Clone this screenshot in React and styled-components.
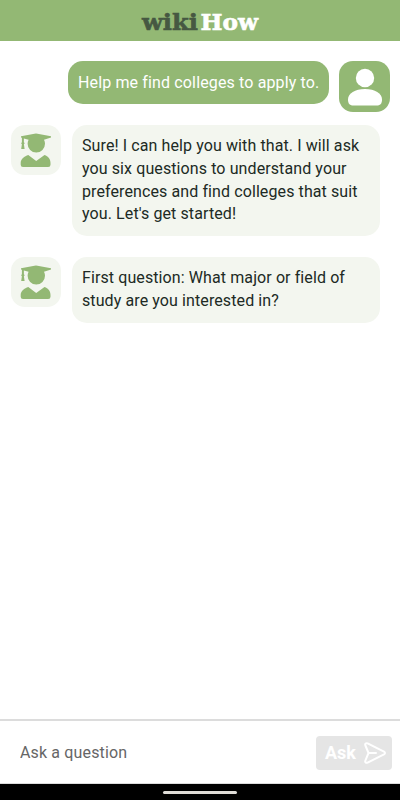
import React, { useState } from "react";
import styled, { createGlobalStyle } from "styled-components";

const GlobalStyle = createGlobalStyle`
  * {
    box-sizing: border-box;
  }
  body {
    margin: 0;
    background: #ffffff;
    font-family: Roboto, "Liberation Sans", sans-serif;
  }
`;

const Screen = styled.div`
  display: flex;
  flex-direction: column;
  width: 100%;
  height: 100vh;
  overflow: hidden;
`;

const Header = styled.header`
  display: flex;
  justify-content: center;
  flex-shrink: 0;
  height: 41px;
  background: #93b874;
`;

const Logo = styled.svg`
  width: 120px;
  height: 41px;
  font-family: "DejaVu Serif", "Liberation Serif", serif;
  font-size: 23px;
  font-weight: 700;
`;

const Chat = styled.main`
  display: flex;
  flex-direction: column;
  flex: 1;
  padding: 20px 10px 0 11px;
`;

const Row = styled.div`
  display: flex;
  align-items: flex-start;
  justify-content: ${(props) => (props.$mine ? "flex-end" : "flex-start")};
  gap: ${(props) => (props.$mine ? "10px" : "11px")};
  margin-bottom: ${(props) => (props.$mine ? "13px" : "21px")};
`;

const Avatar = styled.div`
  flex-shrink: 0;
  width: ${(props) => (props.$mine ? "51px" : "50px")};
  height: ${(props) => (props.$mine ? "51px" : "50px")};
  border-radius: 14px;
  background: ${(props) => (props.$mine ? "#93b874" : "#f3f6ef")};
  svg {
    display: block;
    width: 100%;
    height: 100%;
  }
`;

const Bubble = styled.div`
  width: ${(props) => (props.$mine ? "261px" : "308px")};
  padding: ${(props) => (props.$mine ? "11px 10px 9px" : "10px")};
  border-radius: 15px;
  background: ${(props) => (props.$mine ? "#93b874" : "#f3f6ef")};
  color: ${(props) => (props.$mine ? "#ffffff" : "#202a24")};
  font-size: 16px;
  line-height: 22.8px;
  letter-spacing: ${(props) => (props.$mine ? "0.14px" : "0.1px")};
`;

const Line = styled.span`
  display: block;
  white-space: nowrap;
`;

const InputBar = styled.form`
  display: flex;
  align-items: center;
  flex-shrink: 0;
  height: 65px;
  padding: 1px 8px 0 20px;
  border-top: 2px solid #dcdcdc;
  border-bottom: 1px solid #dcdcdc;
`;

const QuestionInput = styled.input`
  flex: 1;
  min-width: 0;
  padding: 0;
  border: none;
  outline: none;
  background: transparent;
  font-family: inherit;
  font-size: 16px;
  letter-spacing: 0.15px;
  color: #202a24;
  &::placeholder {
    color: #666666;
    opacity: 1;
  }
`;

const AskButton = styled.button`
  display: flex;
  align-items: center;
  justify-content: space-between;
  width: 76px;
  height: 34px;
  padding: 0 6px 0 9px;
  border: none;
  border-radius: 4px;
  background: #e5e5e5;
  color: #ffffff;
  font-family: inherit;
  font-size: 18px;
  font-weight: 700;
`;

const NavBar = styled.div`
  display: flex;
  justify-content: center;
  flex-shrink: 0;
  height: 16px;
  padding-top: 7px;
  background: #000000;
`;

const HomeHandle = styled.div`
  width: 74px;
  height: 3px;
  border-radius: 2px;
  background: #e0ddd8;
`;

const PersonIcon = () => (
  <svg viewBox="0 0 51 51">
    <circle cx="26" cy="17" r="9.2" fill="#fff" />
    <path
      d="M9 38.500C9 32.500 16 28 26 28S43 32.500 43 38.500C43 43 41 44.500 37.500 44.500h-23C11 44.500 9 43 9 38.500z"
      fill="#fff"
    />
  </svg>
);

const GraduateIcon = () => (
  <svg viewBox="0 0 50 50" fill="#93b874">
    <path d="M10 11.300L23.500 8.700q1.500-.3 3 0L40 11.300v1.200L33 14.800c.7 1.300 1 2.600 1 4a8.700 8.700 0 0 1-17.400 0c0-1.400.3-2.700 1-4l-4.700-1.300v3.700l.8 1-.8 1 .7 4.700h-3.400l.7-4.700-.8-1 .8-1V12.800l-.9-.3z" />
    <path d="M17.300 30L25.200 36l8.300-6c3.700 1 6 4.200 6 8v1.700q0 2.300-2.300 2.300H12q-2.300 0-2.300-2.300V38c0-3.800 3.700-7 7.600-8z" />
  </svg>
);

const SendIcon = () => (
  <svg
    width="22"
    height="22"
    viewBox="0 0 22 22"
    fill="none"
    stroke="#fff"
    strokeWidth="2"
    strokeLinecap="round"
    strokeLinejoin="round"
  >
    <path d="M4.500 11L1.400 3.500C.7 1.700 2 .8 3.600 1.400L20 9.600c1.300.7 1.300 2.100 0 2.800L3.600 20.600C2 21.200.7 20.300 1.400 18.500zM4.500 11h7.500" />
  </svg>
);

const messages = [
  { id: 1, mine: true, lines: ["Help me find colleges to apply to."] },
  {
    id: 2,
    mine: false,
    lines: [
      "Sure! I can help you with that. I will ask",
      "you six questions to understand your",
      "preferences and find colleges that suit",
      "you. Let's get started!",
    ],
  },
  {
    id: 3,
    mine: false,
    lines: [
      "First question: What major or field of",
      "study are you interested in?",
    ],
  },
];

const Message = ({ mine, lines }) => (
  <Row $mine={mine}>
    {!mine && (
      <Avatar>
        <GraduateIcon />
      </Avatar>
    )}
    <Bubble $mine={mine}>
      {lines.map((line) => (
        <Line key={line}>{line}</Line>
      ))}
    </Bubble>
    {mine && (
      <Avatar $mine>
        <PersonIcon />
      </Avatar>
    )}
  </Row>
);

const App = () => {
  const [question, setQuestion] = useState("");

  return (
    <Screen>
      <GlobalStyle />
      <Header>
        <Logo viewBox="0 0 120 41">
          <text x="2" y="29.500" fill="#465842" stroke="#465842" strokeWidth="0.600" textLength="56" lengthAdjust="spacingAndGlyphs">
            wiki
          </text>
          <text x="60.500" y="29.500" fill="#fff" stroke="#fff" strokeWidth="0.600" textLength="57.500" lengthAdjust="spacingAndGlyphs">
            How
          </text>
        </Logo>
      </Header>
      <Chat>
        {messages.map((data) => (
          <Message key={data.id} mine={data.mine} lines={data.lines} />
        ))}
      </Chat>
      <InputBar onSubmit={(e) => e.preventDefault()}>
        <QuestionInput
          value={question}
          placeholder="Ask a question"
          onChange={(e) => setQuestion(e.target.value)}
        />
        <AskButton type="submit">
          Ask
          <SendIcon />
        </AskButton>
      </InputBar>
      <NavBar>
        <HomeHandle />
      </NavBar>
    </Screen>
  );
};

export default App;
